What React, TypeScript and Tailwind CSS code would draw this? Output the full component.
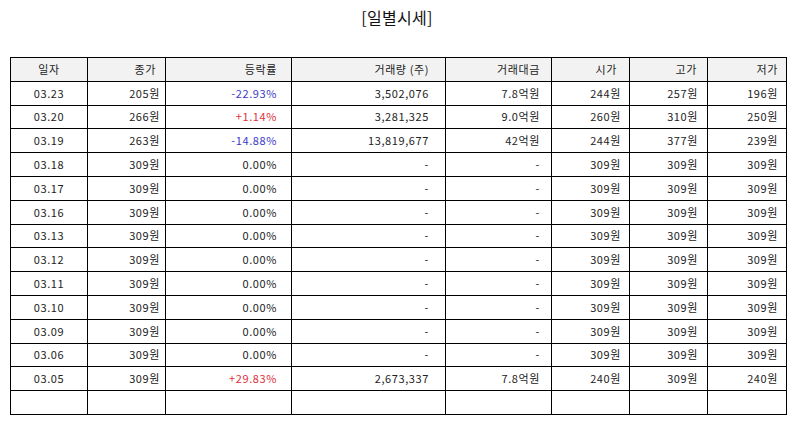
import React from 'react';

type Row = {
  date: string;
  close: string;
  rate: string;
  volume: string;
  amount: string;
  open: string;
  high: string;
  low: string;
};

const rows: Row[] = [
  { date: '03.23', close: '205원', rate: '-22.93%', volume: '3,502,076', amount: '7.8억원', open: '244원', high: '257원', low: '196원' },
  { date: '03.20', close: '266원', rate: '+1.14%', volume: '3,281,325', amount: '9.0억원', open: '260원', high: '310원', low: '250원' },
  { date: '03.19', close: '263원', rate: '-14.88%', volume: '13,819,677', amount: '42억원', open: '244원', high: '377원', low: '239원' },
  { date: '03.18', close: '309원', rate: '0.00%', volume: '-', amount: '-', open: '309원', high: '309원', low: '309원' },
  { date: '03.17', close: '309원', rate: '0.00%', volume: '-', amount: '-', open: '309원', high: '309원', low: '309원' },
  { date: '03.16', close: '309원', rate: '0.00%', volume: '-', amount: '-', open: '309원', high: '309원', low: '309원' },
  { date: '03.13', close: '309원', rate: '0.00%', volume: '-', amount: '-', open: '309원', high: '309원', low: '309원' },
  { date: '03.12', close: '309원', rate: '0.00%', volume: '-', amount: '-', open: '309원', high: '309원', low: '309원' },
  { date: '03.11', close: '309원', rate: '0.00%', volume: '-', amount: '-', open: '309원', high: '309원', low: '309원' },
  { date: '03.10', close: '309원', rate: '0.00%', volume: '-', amount: '-', open: '309원', high: '309원', low: '309원' },
  { date: '03.09', close: '309원', rate: '0.00%', volume: '-', amount: '-', open: '309원', high: '309원', low: '309원' },
  { date: '03.06', close: '309원', rate: '0.00%', volume: '-', amount: '-', open: '309원', high: '309원', low: '309원' },
  { date: '03.05', close: '309원', rate: '+29.83%', volume: '2,673,337', amount: '7.8억원', open: '240원', high: '309원', low: '240원' },
];

function rateColor(rate: string) {
  if (rate.startsWith('-')) return 'text-[#3a3ac8]';
  if (rate.startsWith('+')) return 'text-[#e0303a]';
  return 'text-[#222]';
}

const cell = 'border-[1.5px] border-black h-[23.8px] p-0 align-middle';

export default function App() {
  return (
    <div className="w-[794px] h-[425px] bg-white text-[#222] font-['Noto_Sans_CJK_KR','Noto_Sans',sans-serif]">
      <h1 className="pt-[5px] text-center text-[16px] leading-[24px] tracking-[0.3px] text-[#111]">[일별시세]</h1>
      <table className="mt-[28px] ml-[10px] w-[776px] border-collapse table-fixed text-[11px] leading-none tracking-[0.6px]">
        <colgroup>
          <col className="w-[77px]" />
          <col className="w-[78px]" />
          <col className="w-[126px]" />
          <col className="w-[154px]" />
          <col className="w-[106px]" />
          <col className="w-[78px]" />
          <col className="w-[78px]" />
          <col className="w-[79px]" />
        </colgroup>
        <thead>
          <tr className="bg-[#f2f2f2]">
            <th className={`${cell} font-normal text-center`}>일자</th>
            <th className={`${cell} font-normal text-right pr-[9px]`}>종가</th>
            <th className={`${cell} font-normal text-right pr-[14px]`}>등락률</th>
            <th className={`${cell} font-normal text-right pr-[16px]`}>거래량 (주)</th>
            <th className={`${cell} font-normal text-right pr-[11px]`}>거래대금</th>
            <th className={`${cell} font-normal text-right pr-[12px]`}>시가</th>
            <th className={`${cell} font-normal text-right pr-[10px]`}>고가</th>
            <th className={`${cell} font-normal text-right pr-[8px]`}>저가</th>
          </tr>
        </thead>
        <tbody>
          {rows.map((r) => (
            <tr key={r.date}>
              <td className={`${cell} text-center`}>{r.date}</td>
              <td className={`${cell} text-right pr-[5px]`}>{r.close}</td>
              <td className={`${cell} text-right pr-[14px] ${rateColor(r.rate)}`}>{r.rate}</td>
              <td className={`${cell} text-right pr-[16px]`}>{r.volume}</td>
              <td className={`${cell} text-right pr-[11px]`}>{r.amount}</td>
              <td className={`${cell} text-right pr-[8px]`}>{r.open}</td>
              <td className={`${cell} text-right pr-[9px]`}>{r.high}</td>
              <td className={`${cell} text-right pr-[8px]`}>{r.low}</td>
            </tr>
          ))}
          <tr>
            {Array.from({ length: 8 }).map((_, i) => (
              <td key={i} className={cell}></td>
            ))}
          </tr>
        </tbody>
      </table>
    </div>
  );
}
